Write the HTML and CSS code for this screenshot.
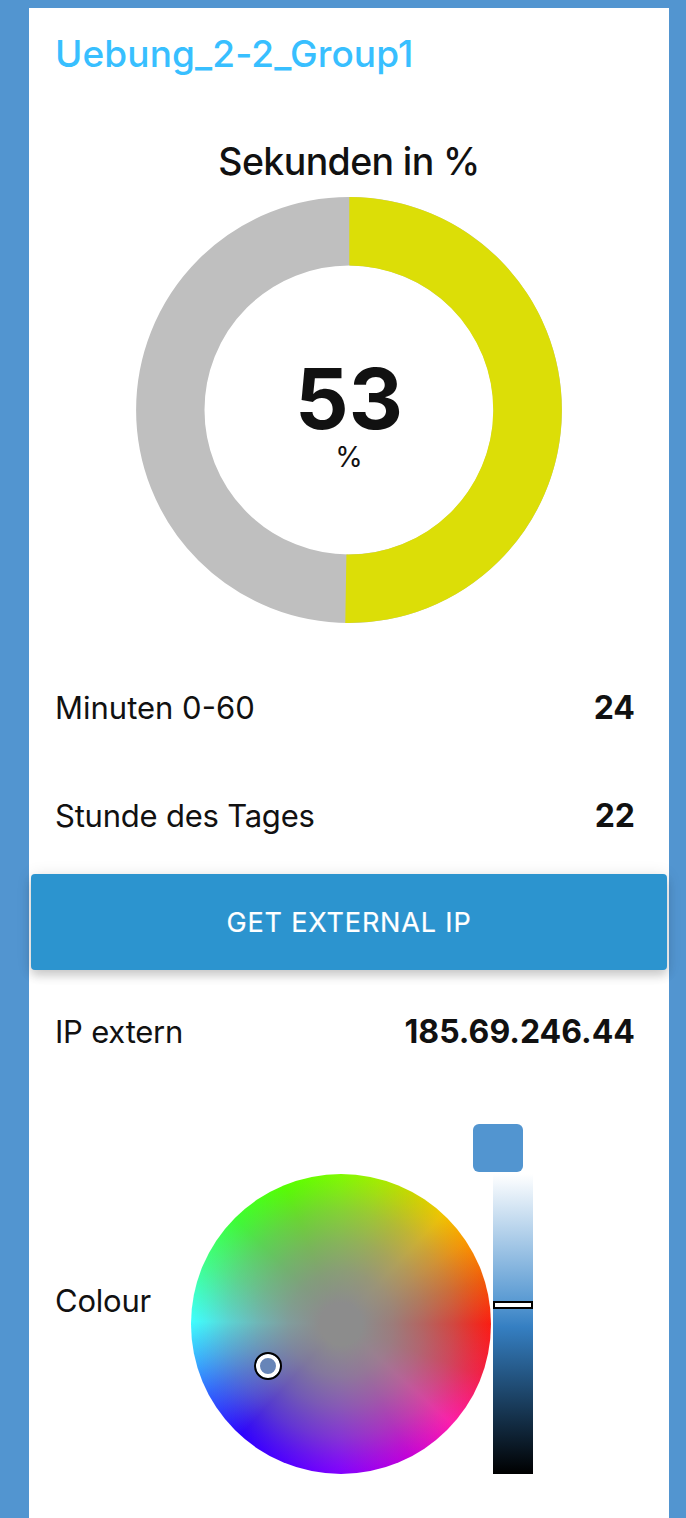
FILE: index.html
```
<!DOCTYPE html>
<html lang="de">
<head>
<meta charset="utf-8">
<meta name="viewport" content="width=device-width">
<title>Uebung_2-2_Group1</title>
<link rel="stylesheet" href="styles.css">
</head>
<body>
<main class="card">
  <h1 class="title">Uebung_2-2_Group1</h1>
  <section class="gauge">
    <h2 class="gauge-title">Sekunden in %</h2>
    <div class="donut">
      <svg class="donut-ring" viewBox="0 0 426 426" aria-hidden="true">
        <circle cx="213" cy="213" r="178.7" fill="none" stroke="#bfbfbf" stroke-width="68.4"/>
        <path d="M213.3 0A213 213 0 1 1 209.3 425.97L210.4 357.48A144.5 144.5 0 1 0 213.3 68.5Z" fill="#dcde07"/>
      </svg>
      <div class="donut-label">
        <span class="donut-value">53</span>
        <span class="donut-unit">%</span>
      </div>
    </div>
  </section>
  <div class="row"><span class="label">Minuten 0-60</span><strong class="value">24</strong></div>
  <div class="row"><span class="label label-tight">Stunde des Tages</span><strong class="value">22</strong></div>
  <button class="button" type="button">GET EXTERNAL IP</button>
  <div class="row"><span class="label label-tight">IP extern</span><strong class="value">185.69.246.44</strong></div>
  <div class="colour-row">
    <span class="label label-tight colour-label">Colour</span>
    <div class="wheel"><span class="wheel-thumb"></span></div>
    <div class="side">
      <div class="swatch"></div>
      <div class="slider"><span class="slider-thumb"></span></div>
    </div>
  </div>
</main>
</body>
</html>
```

FILE: styles.css
```
* { box-sizing: border-box; }
body {
  margin: 0;
  height: 1518px;
  padding: 8px 17px 0 29px;
  overflow: hidden;
  background: #5295d0;
  color: #111;
  font-family: Inter, "Liberation Sans", sans-serif;
}
.card { height: 1510px; background: #fff; }
.title {
  margin: 0;
  height: 92px;
  padding: 0 26px;
  color: #38bfff;
  font-size: 37px;
  font-weight: 500;
  line-height: 91px;
  letter-spacing: 0.1px;
}
.gauge {
  display: flex;
  flex-direction: column;
  align-items: center;
  height: 553px;
  padding-top: 37px;
}
.gauge-title {
  margin: 0;
  height: 60px;
  font-size: 37.5px;
  font-weight: 500;
  line-height: 49px;
  letter-spacing: -0.62px;
}
.donut { display: grid; place-items: center; width: 426px; height: 426px; }
.donut-ring, .donut-label { grid-area: 1 / 1; }
.donut-ring { width: 426px; height: 426px; }
.donut-label { display: flex; flex-direction: column; align-items: center; padding-top: 9px; }
.donut-value { font-size: 84px; font-weight: 700; line-height: 84px; }
.donut-unit { font-size: 28px; line-height: 32px; }
.row {
  display: flex;
  align-items: center;
  justify-content: space-between;
  height: 108px;
  padding: 1px 34px 0 26px;
}
.label { font-size: 31px; line-height: 40px; }
.label-tight { letter-spacing: -0.22px; }
.value { font-size: 32px; font-weight: 700; line-height: 40px; }
.button {
  display: block;
  width: 636px;
  height: 96px;
  margin: 5px 2px 7px;
  padding: 0;
  border: 0;
  border-radius: 4px;
  background: #2c94cf;
  box-shadow: 0 6px 10px rgba(0, 0, 0, .16), 0 1px 16px rgba(0, 0, 0, .1);
  color: #fff;
  font: 400 27px/97px Inter, "Liberation Sans", sans-serif;
  letter-spacing: 0.85px;
  -webkit-text-stroke: 0.2px #fff;
}
.colour-row {
  display: grid;
  grid-template-columns: 136px 302px 60px;
  height: 350px;
  margin-top: 39px;
  padding-left: 26px;
}
.colour-label { padding-top: 157px; }
.wheel {
  position: relative;
  width: 300px;
  height: 300px;
  margin-top: 50px;
  border-radius: 50%;
  background:
    radial-gradient(circle closest-side, #8c8c8c 0%, #8c8c8c 14%, rgba(140,140,140,.85) 35%, rgba(140,140,140,.64) 55%, rgba(140,140,140,.38) 75%, rgba(140,140,140,.14) 90%, rgba(140,140,140,0) 100%),
    conic-gradient(#80fb00 0deg, #a4ec00 15deg, #c8d700 28deg, #f1c400 43deg, #fa9600 57deg, #f25a08 73deg, #fb1d12 90deg, #f32046 110deg, #ff1cac 132deg, #c400d8 153deg, #8200ff 180deg, #5200ff 202deg, #2c00ff 222deg, #3068ff 243deg, #38b0ff 256deg, #3effff 271deg, #40ff8a 294deg, #3cff32 315deg, #56ff00 338deg, #80fb00 360deg);
}
.wheel-thumb {
  position: absolute;
  top: 178px;
  left: 63px;
  width: 28px;
  height: 28px;
  border: 2px solid #000;
  border-radius: 50%;
  background: #6785b8;
  box-shadow: inset 0 0 0 4px #fff;
}
.side { display: flex; flex-direction: column; width: 60px; }
.swatch {
  width: 50px;
  height: 48px;
  margin-left: -20px;
  border-radius: 6px;
  background: #5295d0;
}
.slider {
  position: relative;
  width: 40px;
  height: 300px;
  margin-top: 2px;
  background: linear-gradient(#fff 0%, #5b9bd3 42%, #357fc2 51%, #000 100%);
}
.slider-thumb {
  position: absolute;
  top: 127px;
  left: 0;
  width: 40px;
  height: 8px;
  border: 2px solid #000;
  background: #fff;
}
```
